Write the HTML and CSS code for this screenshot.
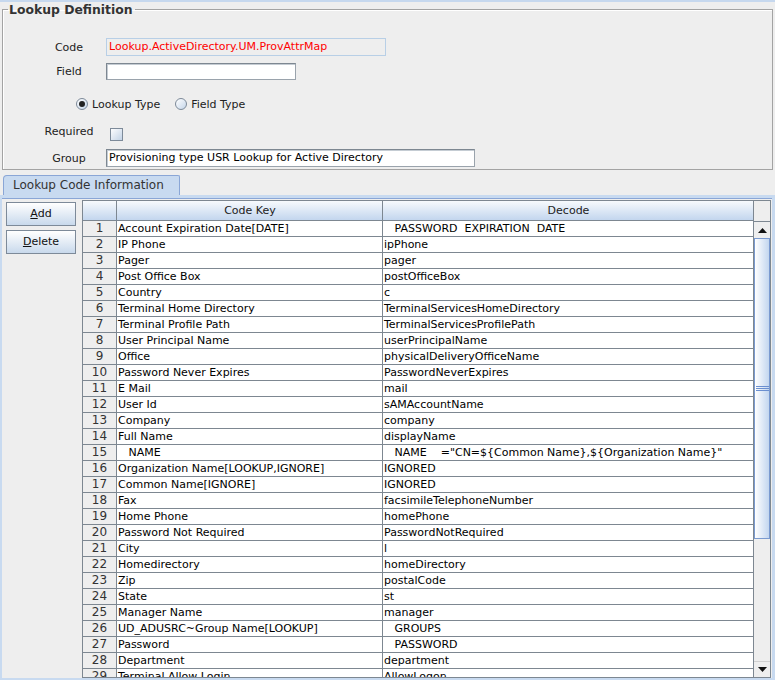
FILE: index.html
```html
<!DOCTYPE html>
<html>
<head>
<meta charset="utf-8">
<link rel="stylesheet" href="styles.css">
</head>
<body>
<div class="topbar"></div>
<fieldset class="panel">
  <legend class="panel-title">Lookup Definition</legend>
  <div class="row row-code">
    <span class="lbl">Code</span>
    <span class="ro-field">Lookup.ActiveDirectory.UM.ProvAttrMap</span>
  </div>
  <div class="row row-field">
    <span class="lbl">Field</span>
    <span class="in-field w-field"></span>
  </div>
  <div class="row row-radio">
    <span class="radio on"></span><span class="radio-lbl">Lookup Type</span>
    <span class="radio"></span><span class="radio-lbl">Field Type</span>
  </div>
  <div class="row row-req">
    <span class="lbl lbl-req">Required</span>
    <span class="check"></span>
  </div>
  <div class="row row-group">
    <span class="lbl">Group</span>
    <span class="in-field w-group">Provisioning type USR Lookup for Active Directory</span>
  </div>
</fieldset>

<div class="tabs">
  <div class="tab">Lookup Code Information</div>
</div>
<div class="tabpanel">
  <div class="buttons">
    <div class="btn"><u>A</u>dd</div>
    <div class="btn"><u>D</u>elete</div>
  </div>
  <div class="grid-wrap">
    <div class="grid">
      <div class="grow ghead">
        <div class="c cn"></div>
        <div class="c ck">Code Key</div>
        <div class="c cd">Decode</div>
      </div>
      <div class="grow"><div class="c cn">1</div><div class="c ck">Account Expiration Date[DATE]</div><div class="c cd">   PASSWORD  EXPIRATION  DATE</div></div>
      <div class="grow"><div class="c cn">2</div><div class="c ck">IP Phone</div><div class="c cd">ipPhone</div></div>
      <div class="grow"><div class="c cn">3</div><div class="c ck">Pager</div><div class="c cd">pager</div></div>
      <div class="grow"><div class="c cn">4</div><div class="c ck">Post Office Box</div><div class="c cd">postOfficeBox</div></div>
      <div class="grow"><div class="c cn">5</div><div class="c ck">Country</div><div class="c cd">c</div></div>
      <div class="grow"><div class="c cn">6</div><div class="c ck">Terminal Home Directory</div><div class="c cd">TerminalServicesHomeDirectory</div></div>
      <div class="grow"><div class="c cn">7</div><div class="c ck">Terminal Profile Path</div><div class="c cd">TerminalServicesProfilePath</div></div>
      <div class="grow"><div class="c cn">8</div><div class="c ck">User Principal Name</div><div class="c cd">userPrincipalName</div></div>
      <div class="grow"><div class="c cn">9</div><div class="c ck">Office</div><div class="c cd">physicalDeliveryOfficeName</div></div>
      <div class="grow"><div class="c cn">10</div><div class="c ck">Password Never Expires</div><div class="c cd">PasswordNeverExpires</div></div>
      <div class="grow"><div class="c cn">11</div><div class="c ck">E Mail</div><div class="c cd">mail</div></div>
      <div class="grow"><div class="c cn">12</div><div class="c ck">User Id</div><div class="c cd">sAMAccountName</div></div>
      <div class="grow"><div class="c cn">13</div><div class="c ck">Company</div><div class="c cd">company</div></div>
      <div class="grow"><div class="c cn">14</div><div class="c ck">Full Name</div><div class="c cd">displayName</div></div>
      <div class="grow"><div class="c cn">15</div><div class="c ck">   NAME</div><div class="c cd">   NAME    ="CN=${Common Name},${Organization Name}"</div></div>
      <div class="grow"><div class="c cn">16</div><div class="c ck">Organization Name[LOOKUP,IGNORE]</div><div class="c cd">IGNORED</div></div>
      <div class="grow"><div class="c cn">17</div><div class="c ck">Common Name[IGNORE]</div><div class="c cd">IGNORED</div></div>
      <div class="grow"><div class="c cn">18</div><div class="c ck">Fax</div><div class="c cd">facsimileTelephoneNumber</div></div>
      <div class="grow"><div class="c cn">19</div><div class="c ck">Home Phone</div><div class="c cd">homePhone</div></div>
      <div class="grow"><div class="c cn">20</div><div class="c ck">Password Not Required</div><div class="c cd">PasswordNotRequired</div></div>
      <div class="grow"><div class="c cn">21</div><div class="c ck">City</div><div class="c cd">l</div></div>
      <div class="grow"><div class="c cn">22</div><div class="c ck">Homedirectory</div><div class="c cd">homeDirectory</div></div>
      <div class="grow"><div class="c cn">23</div><div class="c ck">Zip</div><div class="c cd">postalCode</div></div>
      <div class="grow"><div class="c cn">24</div><div class="c ck">State</div><div class="c cd">st</div></div>
      <div class="grow"><div class="c cn">25</div><div class="c ck">Manager Name</div><div class="c cd">manager</div></div>
      <div class="grow"><div class="c cn">26</div><div class="c ck">UD_ADUSRC~Group Name[LOOKUP]</div><div class="c cd">   GROUPS</div></div>
      <div class="grow"><div class="c cn">27</div><div class="c ck">Password</div><div class="c cd">   PASSWORD</div></div>
      <div class="grow"><div class="c cn">28</div><div class="c ck">Department</div><div class="c cd">department</div></div>
      <div class="grow"><div class="c cn">29</div><div class="c ck">Terminal Allow Login</div><div class="c cd">AllowLogon</div></div>
    </div>
    <div class="vscroll">
      <div class="sb-corner"></div>
      <div class="sb-btn"><svg width="9" height="5" viewBox="0 0 9 5"><path d="M0 5 L4.5 0 L9 5 Z" fill="#111"/></svg></div>
      <div class="sb-thumb"><svg width="13" height="5" viewBox="0 0 13 5"><path d="M0 0.5H13M0 2.5H13M0 4.5H13" stroke="#6b8fd0" stroke-width="1"/></svg></div>
      <div class="sb-track"></div>
      <div class="sb-btn sb-down"><svg width="9" height="5" viewBox="0 0 9 5"><path d="M0 0 L4.5 5 L9 0 Z" fill="#111"/></svg></div>
    </div>
  </div>
</div>
</body>
</html>
```

FILE: styles.css
```css
* { box-sizing: border-box; }
html, body {
  margin: 0;
  padding: 0;
}
body {
  width: 775px;
  height: 680px;
  overflow: hidden;
  background: #eeeeee;
  font-family: "DejaVu Sans", "Liberation Sans", sans-serif;
  font-size: 11px;
  color: #000;
}
.topbar {
  height: 2px;
  background: #c6d8ee;
}
.panel {
  margin: 0 2px;
  padding: 0;
  height: 168px;
  border: 1px solid #a3a3a3;
  box-shadow: inset 1px 1px 0 #ffffff;
  min-width: 0;
}
.panel-title {
  font-weight: bold;
  font-size: 12.4px;
  line-height: 15px;
  color: #333;
  padding: 0 2px 0 1px;
  margin-left: 5px;
}
.row {
  display: flex;
  align-items: center;
  padding-left: 33px;
}
.lbl {
  width: 66px;
  margin-right: 4px;
  text-align: center;
  color: #222;
}
.row-code { margin-top: 21px; height: 18px; }
.ro-field {
  width: 280px;
  height: 18px;
  border: 1px solid #b8cfe6;
  background: #eeeeee;
  color: #ff0000;
  padding-left: 2px;
  line-height: 16px;
}
.row-field { margin-top: 7px; height: 17px; }
.in-field {
  height: 17px;
  background: #fff;
  border: 1px solid #7d8791;
  border-right-color: #9aa3ac;
  border-bottom-color: #9aa3ac;
  box-shadow: inset 1px 1px 0 #c5ccd3;
  padding-left: 2px;
  line-height: 15px;
}
.w-field { width: 190px; }
.w-group { width: 369px; height: 18px; line-height: 16px; }
.row-radio {
  margin-top: 17px;
  height: 14px;
  padding-left: 73px;
}
.radio {
  width: 12px;
  height: 12px;
  border-radius: 50%;
  border: 1px solid #7d8a99;
  background: linear-gradient(135deg, #ffffff, #c5d6ea);
  position: relative;
  margin-right: 4px;
}
.radio.on::after {
  content: "";
  position: absolute;
  left: 2px;
  top: 2px;
  width: 6px;
  height: 6px;
  border-radius: 50%;
  background: #222;
}
.radio-lbl {
  margin-right: 15px;
  color: #222;
}
.row-req {
  margin-top: 14px;
  height: 16px;
  align-items: flex-start;
}
.lbl-req { margin-top: 0; }
.check {
  margin-left: 4px;
  margin-top: 3px;
  width: 13px;
  height: 13px;
  border: 1px solid #7d8a99;
  background: linear-gradient(135deg, #fdfdfe, #c3d3e6);
}
.row-group { margin-top: 8px; height: 18px; }

.tabs {
  margin-top: 5px;
  padding-left: 3px;
  display: flex;
}
.tab {
  width: 177px;
  height: 20px;
  background: #c8daf0;
  border: 1px solid #8aa6d6;
  border-bottom: none;
  border-radius: 4px 2px 0 0;
  font-size: 12px;
  line-height: 18px;
  padding-left: 9px;
  color: #333;
}
.tabpanel {
  height: 486px;
  border: 3px solid #c8daf0;
  border-left: 2px solid #c8daf0;
  box-shadow: inset 0 1px 0 #8aa6d6;
  display: flex;
  align-items: flex-start;
}
.buttons {
  display: flex;
  flex-direction: column;
  gap: 4px;
  margin: 4px 6px 0 4px;
}
.btn {
  width: 70px;
  height: 24px;
  border: 1px solid #7d8a99;
  background: linear-gradient(#ffffff, #c8d9ec);
  text-align: center;
  line-height: 22px;
  color: #111;
}
.grid-wrap {
  flex: 1;
  margin: 2px 1px 0 0;
  height: 478px;
  border: 1px solid #7d8791;
  display: flex;
  overflow: hidden;
}
.grid {
  flex: 1;
  overflow: hidden;
  background: #fff;
  border-right: 1px solid #7d8791;
}
.grow {
  display: flex;
  height: 16px;
  border-bottom: 1px solid #7d8791;
}
.grow.ghead {
  height: 20px;
  background: linear-gradient(#f7fafd, #c3d6ee);
}
.c {
  white-space: pre;
  overflow: hidden;
  line-height: 15px;
  padding-left: 1px;
}
.cn {
  width: 34px;
  border-right: 1px solid #7d8791;
  background: #eeeeee;
  text-align: center;
  font-size: 12px;
  color: #333;
  padding-left: 0;
}
.ck {
  width: 266px;
  border-right: 1px solid #7d8791;
}
.cd { flex: 1; }
.ghead .c {
  background: transparent;
  text-align: center;
  line-height: 19px;
  color: #222;
}
.vscroll {
  width: 16px;
  display: flex;
  flex-direction: column;
  background: #eeeeee;
}
.sb-corner {
  height: 21px;
  border-bottom: 1px solid #7d8791;
  background: #eeeeee;
}
.sb-btn {
  height: 16px;
  display: flex;
  align-items: center;
  justify-content: center;
  background: #eeeeee;
}
.sb-thumb {
  height: 301px;
  border: 1px solid #7a9ad0;
  background: linear-gradient(90deg, #ffffff, #c3d6ef);
  display: flex;
  align-items: center;
  justify-content: center;
}
.sb-track { flex: 1; }
.sb-down { border-top: 1px solid #d0d0d0; }
```
